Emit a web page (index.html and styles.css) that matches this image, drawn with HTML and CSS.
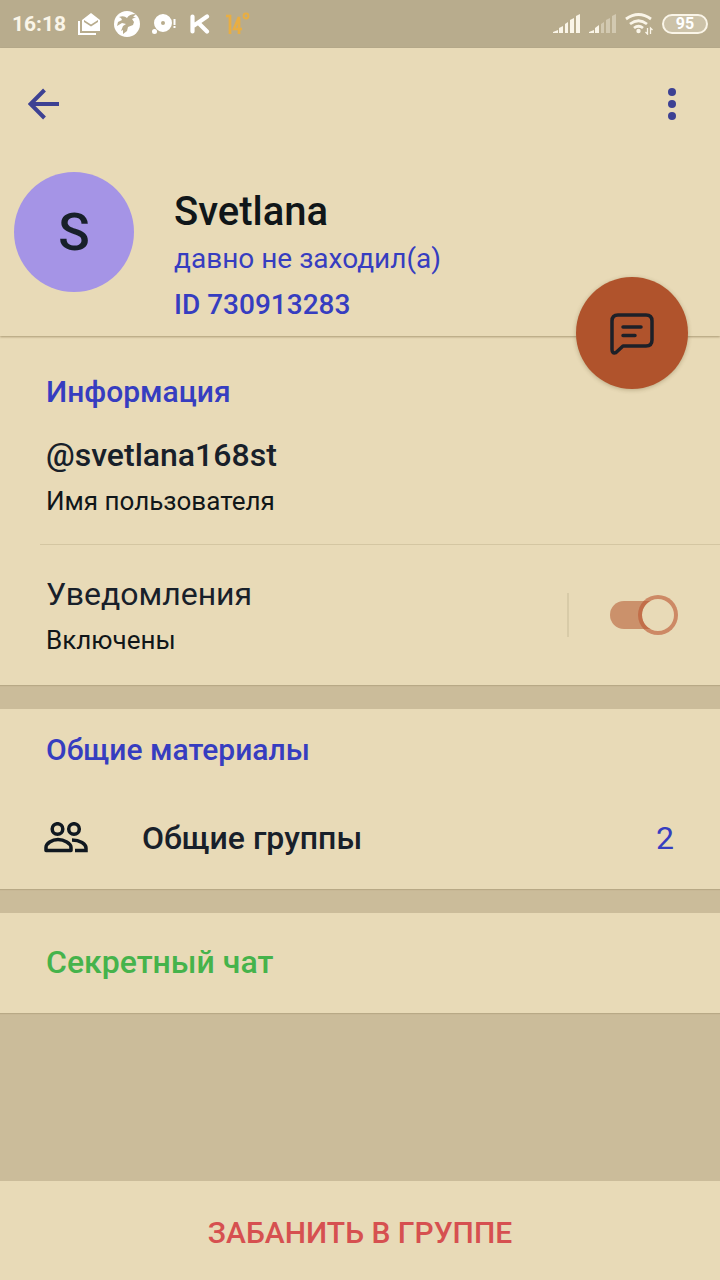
FILE: index.html
```html
<!DOCTYPE html>
<html lang="ru">
<head>
<meta charset="utf-8">
<meta name="viewport" content="width=device-width, initial-scale=1">
<title>Svetlana</title>
<link rel="stylesheet" href="styles.css">
</head>
<body>
<div class="status-bar">
  <div class="status-left">
    <span class="clock">16:18</span>
    <svg width="24" height="24" viewBox="0 0 24 24" fill="#fff"><path d="M0 9h2v12h16v2H0z"/><path fill-rule="evenodd" d="M4 8l9-7 9 7v11H4zM6 8l7 4.500 7-4.500v2l-7 4.500-7-4.500z"/></svg>
    <svg width="26" height="26" viewBox="0 0 26 26"><circle cx="13" cy="13" r="13" fill="#fff"/><path fill="#b8ac8d" d="M5 6q5-2 8 1 2-4 9-4l-3 3 3 0-4 2 2 3-1 3-5 2-1 4-4 3 0-4-2 1 2-5 3-2-4-1-5 3 1-4 4-2-1-2z"/></svg>
    <svg width="24" height="20" viewBox="0 0 24 20"><g fill="#fff"><path fill-rule="evenodd" d="M11 0a9 9 0 1 1 0 18a9 9 0 1 1 0-18zM11 7a2 2 0 1 0 0 4a2 2 0 1 0 0-4z"/><circle cx="2.500" cy="17.500" r="2.500"/><path d="M21.500 5h2v6h-2zM21.500 12h2v2h-2z"/></g></svg>
    <svg class="letter" width="20" height="20" viewBox="0 0 20 20" fill="none" stroke="#fff" stroke-width="4.200" stroke-linecap="round" stroke-linejoin="round"><path d="M2.500 2.500v15M17 2.500L4 11.500M8.500 9l8.500 8.500"/></svg>
    <svg class="degrees" width="24" height="24" viewBox="0 0 24 24" fill="none" stroke="#e9ae42" stroke-width="2.700"><path d="M0 4h4v18M13 22V5L8 17h8"/><circle cx="20" cy="4" r="2.400" stroke-width="2"/></svg>
  </div>
  <div class="status-right">
    <svg width="27" height="20" viewBox="0 0 27 20" fill="#faf5e8"><path d="M0 18l5-2v3H0zM6 14l4-2v7H6zM12 10l3-2v11h-3zM17 6l4-2v15h-4zM23 2l4-2v19h-4z"/></svg>
    <svg width="27" height="20" viewBox="0 0 27 20" fill="#faf5e8"><path d="M0 18l5-2v3H0zM6 14l4-3v8H6z"/><path opacity=".4" d="M12 10l3-2v11h-3zM17 6l4-2v15h-4zM23 2l4-2v19h-4z"/></svg>
    <svg width="28" height="22" viewBox="0 0 28 22" fill="none" stroke="#faf5e8" stroke-width="2.800"><path d="M1 6q12.500-9 25 0M5 11q8.500-6.500 17 0M9 15q4.500-3.500 9 0"/><circle cx="13.500" cy="18" r="2.200" fill="#faf5e8" stroke="none"/><path stroke-width="1.300" d="M22.500 15v6l-2-2M25.500 21v-6l2 2"/></svg>
    <span class="battery">95</span>
  </div>
</div>

<header class="profile">
  <nav class="toolbar">
    <button class="icon-button" type="button" aria-label="Назад"><svg width="32" height="32" viewBox="0 0 32 32" fill="none" stroke="#3d4193" stroke-width="4"><path d="M16.500 2L2.500 16l14 14M3 16h28"/></svg></button>
    <button class="icon-button" type="button" aria-label="Меню"><svg width="8" height="32" viewBox="0 0 8 32" fill="#3d4193"><circle cx="4" cy="4" r="4"/><circle cx="4" cy="16" r="4"/><circle cx="4" cy="28" r="4"/></svg></button>
  </nav>
  <div class="person">
    <div class="avatar">S</div>
    <div>
      <h1 class="name">Svetlana</h1>
      <p class="seen">давно не заходил(а)</p>
      <p class="user-id">ID 730913283</p>
    </div>
  </div>
  <button class="message-button" type="button" aria-label="Написать сообщение"><svg width="44" height="44" viewBox="0 0 44 44" fill="none" stroke="#1d2028" stroke-width="3.500" stroke-linecap="round" stroke-linejoin="round"><path d="M8 4h28q6 0 6 6v19q0 6-6 6H13l-7 6.500q-4 1.500-4-3V10q0-6 6-6zM13 16h18M13 24.500h12"/></svg></button>
</header>

<main class="content">
  <section class="card">
    <h2 class="heading">Информация</h2>
    <div class="info-row">
      <p class="value strong">@svetlana168st</p>
      <p class="caption">Имя пользователя</p>
    </div>
    <div class="notify-row">
      <label for="notify">
        <span class="value">Уведомления</span>
        <span class="caption">Включены</span>
      </label>
      <div class="switch-area"><input class="switch" id="notify" type="checkbox" role="switch" checked></div>
    </div>
  </section>

  <section class="card">
    <h2 class="heading">Общие материалы</h2>
    <button class="groups-row" type="button">
      <svg width="44" height="32" viewBox="0 0 44 32" fill="none" stroke="#101820" stroke-width="3.500"><circle cx="13.500" cy="7" r="5.300"/><circle cx="30" cy="7" r="5.300"/><path stroke-linejoin="round" d="M2 28.500v-3c0-4 6-8 12-8s13 4 13 8v3z"/><path d="M28 18c8 0 14 4 14 8v2.500H31"/></svg>
      <span class="value strong">Общие группы</span>
      <span class="count">2</span>
    </button>
  </section>

  <button class="card secret" type="button">Секретный чат</button>
</main>

<footer class="footer"><button class="ban" type="button">ЗАБАНИТЬ В ГРУППЕ</button></footer>
</body>
</html>
```
FILE: styles.css
```css
*,
*::before,
*::after {
  box-sizing: border-box;
}

body {
  margin: 0;
  min-height: 100vh;
  display: flex;
  flex-direction: column;
  background: #cbbc9a;
  color: #18202a;
  font-family: Roboto, "Noto Sans", sans-serif;
}

h1, h2, p {
  margin: 0;
  font-weight: 500;
}

button {
  border: 0;
  padding: 0;
  background: none;
  font: inherit;
  color: inherit;
  cursor: pointer;
}

svg {
  display: block;
  flex: none;
}

.status-bar {
  height: 48px;
  padding: 0 12px;
  display: flex;
  align-items: center;
  justify-content: space-between;
  background: #b8ac8d;
}

.status-left,
.status-right {
  display: flex;
  align-items: center;
  gap: 12px;
}

.status-right {
  gap: 9px;
}

.clock {
  color: #faf5e8;
  font-size: 21px;
  font-weight: 700;
}

.letter {
  margin-left: 2px;
}

.degrees {
  margin-left: 4px;
}

.battery {
  width: 46px;
  height: 20px;
  border: 2px solid #faf5e8;
  border-radius: 10px;
  background: #ccc2a8;
  color: #fff;
  font-size: 16px;
  font-weight: 700;
  line-height: 16px;
  text-align: center;
}

.profile {
  position: relative;
  z-index: 1;
  min-height: 288px;
  background: #e8dab7;
  box-shadow: 0 1px 2px rgba(80, 60, 20, 0.4);
}

.toolbar {
  height: 112px;
  padding: 0 20px;
  display: flex;
  align-items: center;
  justify-content: space-between;
}

.icon-button {
  width: 48px;
  height: 48px;
  display: grid;
  place-items: center;
}

.icon-button:last-child {
  margin-right: 4px;
}

.person {
  padding: 12px 14px 0;
  display: flex;
  gap: 40px;
}

.avatar {
  width: 120px;
  height: 120px;
  border-radius: 50%;
  display: grid;
  place-items: center;
  background: #a594e6;
  font-size: 52px;
  font-weight: 500;
}

.name {
  padding-top: 16px;
  color: #101619;
  font-size: 40px;
  line-height: 48px;
}

.seen,
.user-id {
  color: #363dc0;
  font-size: 28px;
  line-height: 46px;
}

.seen {
  font-weight: 400;
}

.message-button {
  position: absolute;
  right: 32px;
  bottom: -53px;
  width: 112px;
  height: 112px;
  border-radius: 50%;
  display: grid;
  place-items: center;
  background: #b0532c;
  box-shadow: 0 1px 4px rgba(80, 60, 20, 0.3);
}

.content {
  flex: 1;
  display: flex;
  flex-direction: column;
  gap: 24px;
}

.card {
  background: #e8dab7;
  box-shadow: 0 1px 1px rgba(80, 60, 20, 0.15);
}

.heading {
  padding: 36px 46px 0;
  color: #363dc0;
  font-size: 30px;
  line-height: 40px;
}

.card + .card .heading {
  padding-top: 21px;
}

.info-row {
  margin-left: 40px;
  padding: 20px 6px;
  border-bottom: 1px solid #d4c6a2;
}

.value,
.caption {
  display: block;
  line-height: 46px;
  font-weight: 400;
}

.value {
  font-size: 32px;
}

.strong {
  font-weight: 500;
}

.caption {
  color: #101619;
  font-size: 26px;
}

.notify-row {
  padding: 26px 42px 22px 46px;
  display: flex;
  align-items: flex-start;
  justify-content: space-between;
}

.switch-area {
  height: 44px;
  margin-top: 22px;
  padding-left: 41px;
  border-left: 2px solid #d8cba8;
  display: flex;
  align-items: center;
}

.switch {
  appearance: none;
  position: relative;
  width: 68px;
  height: 40px;
  margin: 0;
}

.switch::before {
  content: "";
  position: absolute;
  inset: 6px 14px 6px 0;
  border-radius: 14px;
  background: #cb916b;
}

.switch::after {
  content: "";
  position: absolute;
  right: 0;
  width: 40px;
  height: 40px;
  border: 4px solid rgba(188, 91, 54, 0.63);
  border-radius: 50%;
  background: #e8dab7;
  background-clip: padding-box;
}

.groups-row {
  width: 100%;
  padding: 45px 46px 28px 44px;
  display: flex;
  align-items: center;
  text-align: left;
}

.groups-row .value {
  flex: 1;
  margin-left: 54px;
}

.count {
  color: #363dc0;
  font-size: 32px;
}

.secret {
  min-height: 100px;
  padding: 0 46px 2px;
  color: #45b34b;
  font-size: 32px;
  font-weight: 500;
  text-align: left;
}

.footer {
  background: #e8dab7;
}

.ban {
  width: 100%;
  min-height: 99px;
  padding-top: 4px;
  color: #d65050;
  font-size: 30px;
  font-weight: 500;
}
```
